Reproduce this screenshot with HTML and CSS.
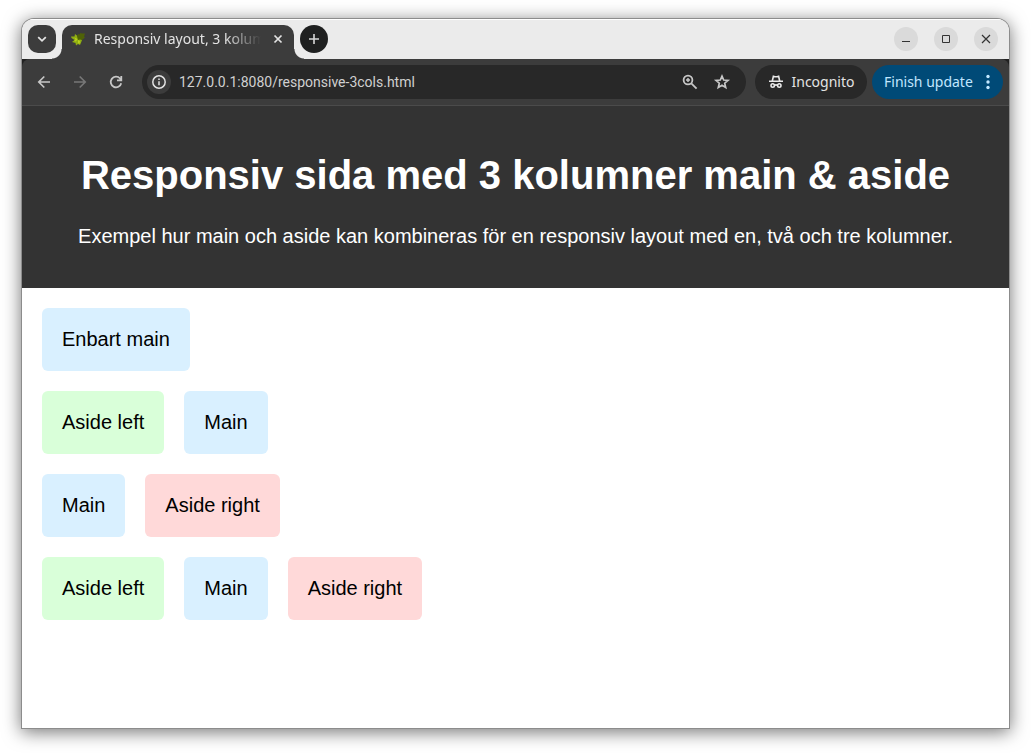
FILE: index.html
```html
<!DOCTYPE html>
<html lang="sv">
<head>
<meta charset="utf-8">
<meta name="viewport" content="width=device-width, initial-scale=1">
<title>Responsiv layout, 3 kolumner</title>
<link rel="stylesheet" href="styles.css">
</head>
<body>
<div class="window">
  <div class="tabstrip">
    <button class="tab-search" type="button" aria-label="Sök bland flikar">
      <svg width="16" height="16" viewBox="0 0 16 16" fill="none" stroke="#e3e3e3" stroke-width="1.8"><path d="M4.200 6.200 8 9.800l3.800-3.600"/></svg>
    </button>
    <div class="tab">
      <svg width="16" height="16" viewBox="0 0 16 16"><path fill="#8fae12" d="M1 5.500 4.500 5.500 5 3l2.500 2L9 5l3 4-.500 1.500-1.500 3.500-2-1-2 1.500L5.500 12l-3.500-1 2.500-2L1.500 7z"/><path fill="#4f6207" d="M7 5.500 8 3l1.500.5L10.500 2l1.500.5 3 0-1 3 1 1-3 2.500-2-.5-2 .5z"/><path fill="#b9d01b" d="M4.500 6.500 7.500 8 6 10.500l-2-.500L5.500 8.500zM8 9l2 1-.500 3-1.500-1z"/></svg>
      <span class="tab-title">Responsiv layout, 3 kolumner</span>
      <button class="tab-close" type="button" aria-label="Stäng flik">
        <svg width="16" height="16" viewBox="0 0 16 16" fill="none" stroke="#e3e3e3" stroke-width="1.700"><path d="m4.500 4.500 7 7m0-7-7 7"/></svg>
      </button>
    </div>
    <button class="new-tab" type="button" aria-label="Ny flik">
      <svg width="16" height="16" viewBox="0 0 16 16" fill="none" stroke="#d8d8d8" stroke-width="1.600"><path d="M8 3v10M3 8h10"/></svg>
    </button>
    <div class="window-controls">
      <button type="button" aria-label="Minimera"><svg width="16" height="16" viewBox="0 0 16 16" fill="none" stroke="#333"><path d="M4 10.500h8"/></svg></button>
      <button type="button" aria-label="Maximera"><svg width="16" height="16" viewBox="0 0 16 16" fill="none" stroke="#333"><path d="M4.500 4.500h7v7h-7z"/></svg></button>
      <button type="button" aria-label="Stäng"><svg width="16" height="16" viewBox="0 0 16 16" fill="none" stroke="#333" stroke-width="1.200"><path d="m4 4 8 8m0-8-8 8"/></svg></button>
    </div>
  </div>

  <div class="toolbar-back">
  <div class="toolbar">
    <div class="nav">
      <button type="button" aria-label="Bakåt"><svg width="20" height="20" viewBox="0 0 20 20" fill="none" stroke="#c7c7c7" stroke-width="1.700"><path d="M16 10H5m5.300-5.500L4.800 10l5.500 5.500"/></svg></button>
      <button type="button" aria-label="Framåt" disabled><svg width="20" height="20" viewBox="0 0 20 20" fill="none" stroke="#777" stroke-width="1.700"><path d="M4 10h11M9.700 4.500l5.500 5.500-5.500 5.500"/></svg></button>
      <button type="button" aria-label="Läs in igen"><svg width="20" height="20" viewBox="0 0 20 20" fill="none" stroke="#c7c7c7" stroke-width="1.800"><path d="M15.200 11.200A5.300 5.300 0 1 1 14 6.500l1.200 1.500M15.300 4v4.300H11"/></svg></button>
    </div>
    <form class="omnibox">
      <button class="site-info" type="button" aria-label="Visa webbplatsinformation">
        <svg width="16" height="16" viewBox="0 0 16 16" fill="none" stroke="#e3e3e3" stroke-width="1.500"><circle cx="8" cy="8" r="6.200"/><path d="M8 7.200v4M8 4.500V6"/></svg>
      </button>
      <label class="address" aria-label="Adress"><input type="text" value="127.0.0.1:8080/responsive-3cols.html"></label>
      <button class="omni-action" type="button" aria-label="Zoom"><svg width="18" height="18" viewBox="0 0 18 18" fill="none" stroke="#c7c7c7" stroke-width="1.800"><circle cx="7" cy="7" r="4.400"/><path d="m10.300 10.300 5.300 5.300"/><path d="M7 5v4M5 7h4" stroke-width="1.500"/></svg></button>
      <button class="omni-action" type="button" aria-label="Bokmärk fliken"><svg width="18" height="18" viewBox="0 0 18 18" fill="none" stroke="#c7c7c7" stroke-width="1.700"><path d="m9 3.200 1.700 3.800 4.300.4-3.300 2.800 1 4.200L9 12.200l-3.700 2.200 1-4.200L3 7.400 7.300 7z"/></svg></button>
    </form>
    <button class="chip incognito" type="button">
      <svg width="16" height="16" viewBox="0 0 16 16" fill="none" stroke="#e8e8e8" stroke-width="1.600"><path d="M1 7.200h14M4.300 7 5.400 2.200l1.400.5h2.400l1.400-.5L11.700 7"/><circle cx="4.700" cy="11.500" r="1.700"/><circle cx="11.300" cy="11.500" r="1.700"/><path d="M6.400 11.300q1.600-.8 3.200 0"/></svg>
      <span>Incognito</span>
    </button>
    <button class="chip update" type="button">
      <span>Finish update</span>
      <svg width="16" height="16" viewBox="0 0 16 16" fill="#c2e7ff"><circle cx="8" cy="2.500" r="1.700"/><circle cx="8" cy="8" r="1.700"/><circle cx="8" cy="13.500" r="1.700"/></svg>
    </button>
  </div>
  </div>

  <div class="page">
    <header class="page-header">
      <h1>Responsiv sida med 3 kolumner main &amp; aside</h1>
      <p>Exempel hur main och aside kan kombineras för en responsiv layout med en, två och tre kolumner.</p>
    </header>
    <div class="examples">
      <div class="row"><section class="box main">Enbart main</section></div>
      <div class="row"><aside class="box left">Aside left</aside><section class="box main">Main</section></div>
      <div class="row"><section class="box main">Main</section><aside class="box right">Aside right</aside></div>
      <div class="row"><aside class="box left">Aside left</aside><section class="box main">Main</section><aside class="box right">Aside right</aside></div>
    </div>
  </div>
</div>
</body>
</html>
```
FILE: styles.css
```css
* { box-sizing: border-box; }

body {
  margin: 0;
  min-height: 100vh;
  padding: 19px 22px 25px;
  display: flex;
  background: #fff;
  font-family: "Liberation Sans", Arial, sans-serif;
}

button {
  display: flex;
  align-items: center;
  justify-content: center;
  flex: none;
  margin: 0;
  padding: 0;
  border: 0;
  background: none;
  color: inherit;
  font: inherit;
}

.window {
  flex: 1;
  min-width: 0;
  display: flex;
  flex-direction: column;
  overflow: hidden;
  border-radius: 12px 12px 0 0;
  background: #fff;
  box-shadow: 0 0 0 1px #8c8c8c, 0 3px 18px 1px rgba(0, 0, 0, 0.55);
}

.tabstrip {
  height: 40px;
  display: flex;
  align-items: center;
  padding: 0 11px 0 6px;
  background: #ebebeb;
  box-shadow: inset 0 1px #fff;
  font: 14px/20px "Noto Sans", sans-serif;
}

.tab-search {
  width: 28px;
  height: 28px;
  border-radius: 10px;
  background: #3c3c3c;
}

.tab {
  position: relative;
  align-self: flex-end;
  width: 232px;
  height: 34px;
  margin: 0 6px;
  padding: 0 8px 6px;
  display: flex;
  align-items: center;
  border-radius: 10px 10px 0 0;
  background: #3c3c3c;
  color: #e3e3e3;
}

.tab::before,
.tab::after {
  content: "";
  position: absolute;
  bottom: 0;
  width: 10px;
  height: 10px;
}

.tab::before {
  right: 100%;
  background: radial-gradient(circle at 0 0, transparent 9px, #3c3c3c 10px);
}

.tab::after {
  left: 100%;
  background: radial-gradient(circle at 100% 0, transparent 9px, #3c3c3c 10px);
}

.tab-title {
  flex: 1;
  margin: 0 9px 0 8px;
  overflow: hidden;
  white-space: nowrap;
  mask-image: linear-gradient(to left, transparent, #000 36px);
}

.tab-close { width: 16px; height: 16px; }

.new-tab {
  width: 28px;
  height: 28px;
  border-radius: 50%;
  background: #1f2020;
}

.window-controls {
  margin-left: auto;
  display: flex;
  gap: 16px;
}

.window-controls button {
  width: 24px;
  height: 24px;
  border-radius: 50%;
  background: #dadada;
}

.toolbar-back { background: #202020; }

.toolbar {
  height: 47px;
  display: flex;
  align-items: center;
  padding: 0 6px 0 4px;
  border-bottom: 1px solid #4b4b4b;
  border-radius: 8px 8px 0 0;
  background: #3c3c3c;
  font: 14px/20px "Noto Sans", sans-serif;
}

.nav {
  display: flex;
  margin-right: 8px;
}

.nav button { width: 36px; height: 34px; }

.omnibox {
  flex: 1;
  min-width: 0;
  height: 34px;
  margin: 0 9px 0 0;
  padding: 0 8px 0 5px;
  display: flex;
  align-items: center;
  border-radius: 17px;
  background: #282828;
}

.site-info {
  width: 24px;
  height: 24px;
  border-radius: 50%;
  background: #3c3c3c;
}

.address {
  flex: 1;
  min-width: 0;
  display: flex;
  margin-left: 8px;
}

.address input {
  width: 100%;
  min-width: 0;
  padding: 0;
  border: 0;
  outline: 0;
  background: none;
  color: #d0d0d0;
  font: 14px/20px Roboto, sans-serif;
}

.omni-action { width: 32px; height: 32px; }

.chip {
  height: 34px;
  border-radius: 17px;
}

.incognito {
  width: 112px;
  margin-right: 5px;
  gap: 8px;
  background: #282828;
  color: #e3e3e3;
}

.update {
  width: 131px;
  padding-left: 12px;
  justify-content: flex-start;
  gap: 7px;
  background: #004a77;
  color: #c2e7ff;
}

.page-header {
  padding: 20px;
  background: #333;
  color: #fff;
  text-align: center;
}

.page-header h1 {
  margin: 27px 0;
  font-size: 40px;
  line-height: 45px;
}

.page-header p {
  margin: 0 0 20px;
  font-size: 20px;
  line-height: 23px;
}

.examples {
  display: flex;
  flex-direction: column;
  gap: 20px;
  padding: 20px;
  color: #000;
  font-size: 20px;
  line-height: 23px;
}

.row {
  display: flex;
  flex-wrap: wrap;
  gap: 20px;
}

.box {
  padding: 20px;
  border-radius: 6px;
}

.main { background: #d9f0ff; }
.left { background: #d9ffd9; }
.right { background: #ffd9d9; }
```
